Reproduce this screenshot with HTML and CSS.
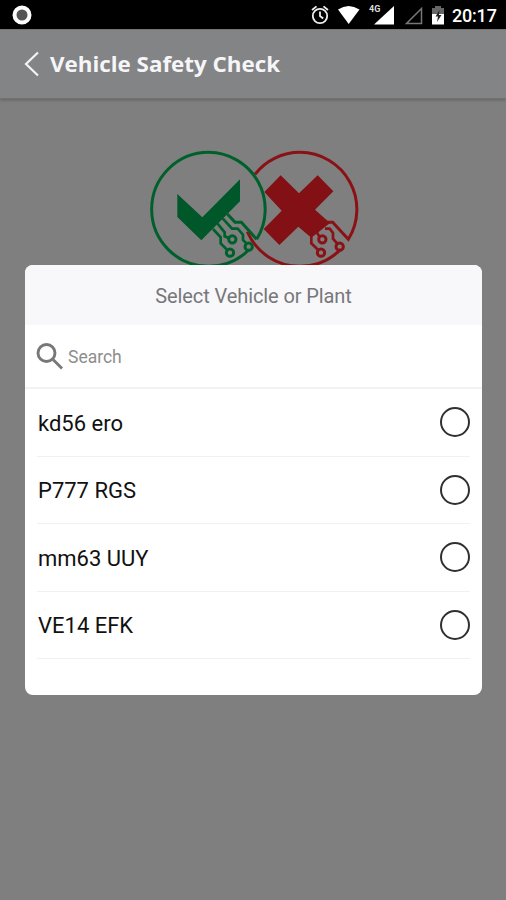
FILE: index.html
```html
<!DOCTYPE html>
<html lang="en">
<head>
<meta charset="utf-8">
<title>Vehicle Safety Check</title>
<link rel="stylesheet" href="styles.css">
</head>
<body>
<div class="screen">
  <div class="status">
    <svg class="record" viewBox="0 0 20 20"><circle cx="10" cy="10" r="7.5" fill="#555" stroke="#fff" stroke-width="4"/></svg>
    <svg class="indicators" viewBox="300 0 150 29">
      <g fill="none" stroke="#eee" stroke-width="1.8"><circle cx="320" cy="16" r="7.2"/><path d="M320 11.500V16l3.200 2.500M312 10l4.500-3.600M323.500 6.400l4.500 3.600"/></g>
      <path d="M338 9.500Q348.500 2.500 359.500 9.500L348.700 24z" fill="#fff"/>
      <path d="M374 24.500H394V6z" fill="#fff"/>
      <text x="369" y="12" class="network">4G</text>
      <path d="M406.500 23.500H421.500V8.500z" fill="none" stroke="#777" stroke-width="1.500"/>
      <path d="M432 8h3V6h6v2h3v6h-12z" fill="#666"/><path d="M432 14h12v10.500h-12z" fill="#fff"/><path d="M439.500 10l-4 6.500h2.500l-1 5.500 4.500-7h-2.500z" fill="#222"/>
    </svg>
    <span class="time">20:17</span>
  </div>
  <header class="topbar">
    <svg class="back" viewBox="0 0 16 26"><path d="M14 1.500L2 13l12 11.500" fill="none" stroke="#f4f4f5" stroke-width="2.200"/></svg>
    <svg class="title" viewBox="0 0 240 40"><text x="1" y="27" textLength="230" lengthAdjust="spacingAndGlyphs">Vehicle Safety Check</text></svg>
  </header>
  <main class="content">
    <svg class="logo" viewBox="0 0 690 390">
      <g fill="none" stroke="#8a1216" stroke-width="9">
        <path d="M345 103A171 171 0 0 1 480 37A171 171 0 0 1 625 298L578 247H556M322 275A171 171 0 0 0 480 379A171 171 0 0 0 602 328"/>
        <path d="M514 290v20l20 19M530 276l8 14M555 266h14l10 13v17l13 15" stroke-width="8"/>
        <circle cx="547" cy="298" r="11"/><circle cx="543" cy="338" r="11"/><circle cx="599" cy="320" r="11"/>
      </g>
      <path d="M422 106l55 54 56-54 47 48-55 55 45 40-56 44-39-33-57 55-47-48 54-55-52-56z" fill="#821014"/>
      <g fill="none" stroke="#00602b" stroke-width="9">
        <path d="M350 298A171 171 0 0 0 206 37A171 171 0 0 0 206 379A171 171 0 0 0 326 330M350 298L304 247H285L262 222"/>
        <path d="M248 235l28 31h17l16 18v16l11 11M232 250l22 27v12l13 6M219 267l23 25v18l20 20" stroke-width="8"/>
        <circle cx="277" cy="298" r="11"/><circle cx="270" cy="338" r="11"/><circle cx="326" cy="320" r="11"/>
      </g>
      <path d="M112 162l75 70L300 118v66L184 301l-72-70z" fill="#00572a"/>
    </svg>
  </main>
  <section class="dialog">
    <h2>Select Vehicle or Plant</h2>
    <div class="search">
      <svg viewBox="0 0 28 28"><g fill="none" stroke="#777" stroke-width="2.900"><circle cx="10.500" cy="11" r="8.500"/><path d="M17 17.500l9 9"/></g></svg>
      <span>Search</span>
    </div>
    <ul>
      <li><span>kd56 ero</span><i></i></li>
      <li><span>P777 RGS</span><i></i></li>
      <li><span>mm63 UUY</span><i></i></li>
      <li><span>VE14 EFK</span><i></i></li>
    </ul>
  </section>
</div>
</body>
</html>
```
FILE: styles.css
```css
* { box-sizing: border-box; }
body { margin: 0; font-family: Roboto, sans-serif; }
.screen { position: relative; width: 506px; height: 900px; background: #7f7f7f; overflow: hidden; }
.status { display: flex; align-items: center; height: 29px; background: #000; color: #fff; }
.record { width: 20px; height: 20px; margin-left: 12px; margin-top: 1px; }
.indicators { width: 150px; height: 29px; margin-left: 268px; }
.network { font: 700 9px Roboto, sans-serif; fill: #ddd; }
.time { margin: 2px 0 0 2px; font-size: 18px; font-weight: 500; letter-spacing: -0.2px; }
.topbar { display: flex; align-items: center; height: 70px; background: #838486; border-top: 1px solid #747476; border-bottom: 1px solid #727274; box-shadow: 0 1px 3px rgba(0, 0, 0, .25); }
.back { width: 16px; height: 26px; margin-left: 24px; }
.title { width: 240px; height: 40px; margin-left: 9px; margin-top: 2px; }
.title text { font: 700 20.5px "Open Sans", sans-serif; fill: #f6f6f8; }
.content { padding: 41px 0 0 140px; }
.logo { display: block; width: 230px; height: 130px; }
.dialog { position: absolute; left: 25px; top: 265px; width: 457px; height: 430px; background: #fff; border-radius: 8px; overflow: hidden; }
h2 { margin: 0; height: 60px; background: #f8f8fa; color: #77777a; font-size: 20px; font-weight: 400; letter-spacing: -0.1px; line-height: 62px; text-align: center; }
.search { display: flex; align-items: center; height: 64px; padding-left: 11px; border-bottom: 2px solid #f3f3f3; color: #8e8e8e; font-size: 17.5px; }
.search svg { width: 28px; height: 28px; }
.search span { margin: 2px 0 0 4px; }
ul { list-style: none; margin: 0; padding: 0 12px; }
li { display: flex; justify-content: space-between; align-items: center; height: 67.5px; border-bottom: 1px solid #f1f1f1; color: #111; font-size: 22px; }
li span { padding: 2px 0 0 1px; }
i { width: 30px; height: 30px; border: 2px solid #303030; border-radius: 50%; }
```
